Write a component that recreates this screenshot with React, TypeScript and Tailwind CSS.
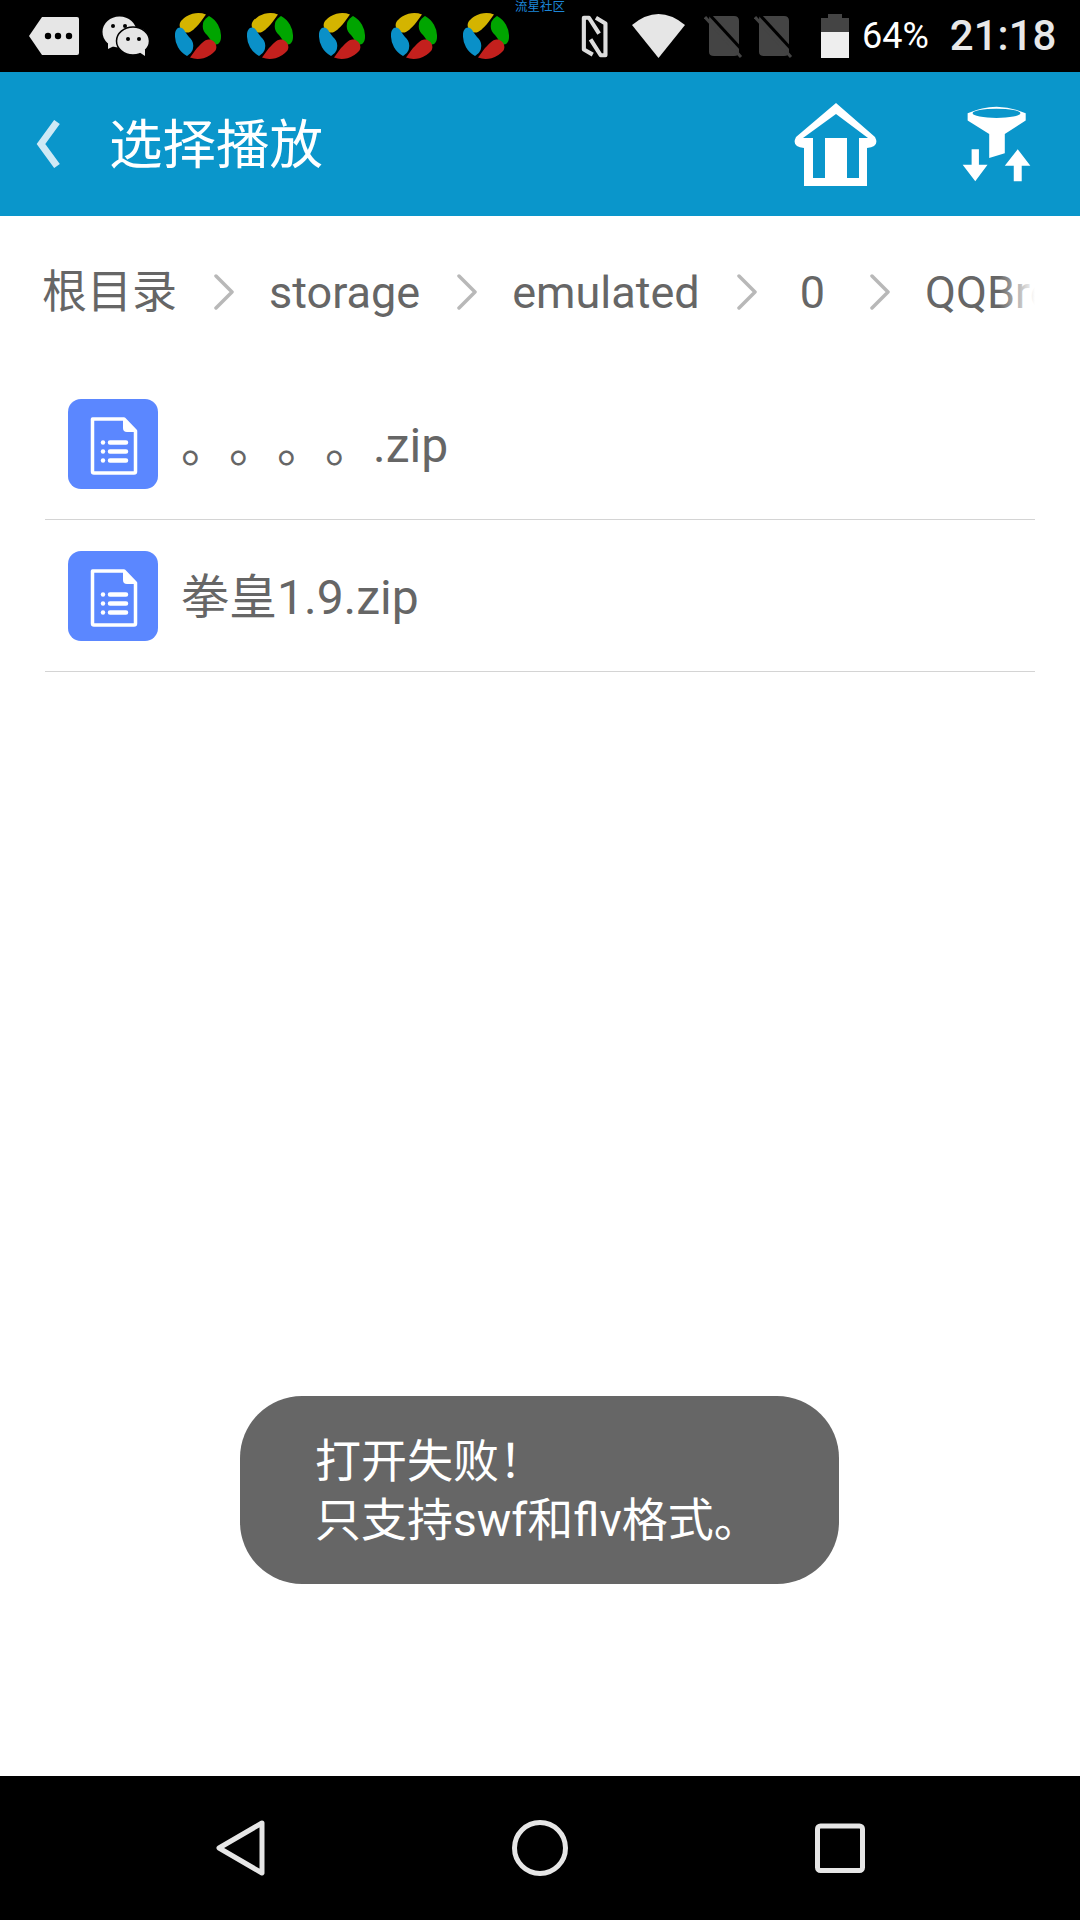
const font = "font-['Roboto','Noto_Sans_CJK_SC',sans-serif]";

const yellowBlob = "M31 1.4A23 23 0 0 0 6 8C3 12 5 18 11 19.5C16 20.5 20 15 24 11C27 7 29 4 31 1.4Z";
const greenBlob = "M34 3A23 23 0 0 1 46 24C46 29 43 33 39 31C36 29 35 25 32 22C29 19 27 16 28 11C28 8 31 5 34 3Z";

const Logo = ({ className }: { className: string }) => (
  <svg viewBox="0 0 46 46" className={`w-[46px] h-[46px] shrink-0 ${className}`}>
    <path fill="#d4b400" d={yellowBlob} />
    <path fill="#00a500" d={greenBlob} />
    <path fill="#c3201d" transform="rotate(180 23 23)" d={yellowBlob} />
    <path fill="#0a90c8" transform="rotate(180 23 23)" d={greenBlob} />
  </svg>
);

const Sim = ({ className }: { className: string }) => (
  <svg viewBox="0 0 39 44" className={`w-[39px] h-[44px] shrink-0 ${className}`}>
    <path fill="#444" d="M6 2H30Q35 2 35 7V38Q35 42 30 42H10Q5 42 5 38V7Q5 2 6 2Z" />
    <path stroke="#000" strokeWidth="3" d="M5 0L39 37" />
    <path stroke="#444" strokeWidth="3" d="M1 3L37 43" />
  </svg>
);

const Chevron = () => (
  <svg viewBox="0 0 20 36" className="w-[20px] h-[36px] shrink-0 ml-[37px] mr-[35px]">
    <path d="M2 2L18 18L2 34" fill="none" stroke="#b8b8b8" strokeWidth="3.5" strokeLinecap="round" strokeLinejoin="round" />
  </svg>
);

const DocIcon = () => (
  <div className="w-[90px] h-[90px] rounded-[13px] bg-[#5b87ff] shrink-0 flex items-center justify-center">
    <svg viewBox="0 0 90 90" className="w-[90px] h-[90px]">
      <path d="M24.5 20H56L67.5 32V72.5Q67.5 74 66 74H26Q24.5 74 24.5 72.5Z" fill="none" stroke="#fff" strokeWidth="3.5" strokeLinejoin="round" />
      <path d="M55 19L69 33H59Q55 33 55 29Z" fill="#fff" />
      <path d="M42 43.5H58M42 52.5H58M42 61.5H58" stroke="#fff" strokeWidth="4.5" strokeLinecap="round" />
      <circle cx="35" cy="43.5" r="2.2" fill="#fff" />
      <circle cx="35" cy="52.5" r="2.2" fill="#fff" />
      <circle cx="35" cy="61.5" r="2.2" fill="#fff" />
    </svg>
  </div>
);

const FileRow = ({ name }: { name: string }) => (
  <div className="h-[152px] mx-[45px] border-b border-[#d4d4d4] flex items-center pl-[23px] pt-px">
    <DocIcon />
    <span className="ml-[23px] pt-[3px] text-[48px] leading-none text-[#666] [text-spacing-trim:space-all]">{name}</span>
  </div>
);

export default function App() {
  return (
    <div className={`relative w-[1080px] h-[1920px] flex flex-col bg-white overflow-hidden ${font}`}>
      {/* status bar */}
      <div className="relative h-[72px] bg-black flex items-center shrink-0 pl-[29px]">
        <svg viewBox="0 0 50 38" className="w-[50px] h-[38px] shrink-0">
          <path fill="#e6e6e6" d="M13 0H48Q50 0 50 2V36Q50 38 48 38H13L0 19Z" />
          <circle cx="19" cy="19" r="3.2" fill="#000" />
          <circle cx="29" cy="19" r="3.2" fill="#000" />
          <circle cx="40" cy="19" r="3.2" fill="#000" />
        </svg>
        <svg viewBox="0 0 48 40" className="w-[48px] h-[40px] shrink-0 ml-[23px]">
          <ellipse cx="17.5" cy="16" rx="17" ry="15.5" fill="#e6e6e6" />
          <path fill="#e6e6e6" d="M6 26L6 33L14 29Z" />
          <ellipse cx="31" cy="25" rx="16.5" ry="14" fill="#e6e6e6" stroke="#000" strokeWidth="1.5" />
          <path fill="#e6e6e6" d="M37 36L43 40L43 33Z" />
          <circle cx="11" cy="10" r="2" fill="#000" />
          <circle cx="23" cy="10" r="2" fill="#000" />
          <circle cx="26" cy="23" r="2" fill="#000" />
          <circle cx="37" cy="23" r="2" fill="#000" />
        </svg>
        <Logo className="ml-[25px]" />
        <Logo className="ml-[26px]" />
        <Logo className="ml-[26px]" />
        <Logo className="ml-[26px]" />
        <Logo className="ml-[26px]" />
        <svg viewBox="115 42 85 134" className="w-[27px] h-[45px] shrink-0 ml-[72px]">
          <path d="M152 166L124 150V50H140L172 100M162 50L192 68V168H177L145 118" fill="none" stroke="#dcdcdc" strokeWidth="13" strokeLinejoin="round" />
        </svg>
        <svg viewBox="0 0 53 44" className="w-[53px] h-[44px] shrink-0 ml-[24px]">
          <path fill="#e6e6e6" d="M0 11Q26.5 -11 53 11L26.5 44Z" />
        </svg>
        <Sim className="ml-[19px]" />
        <Sim className="ml-[11px]" />
        <svg viewBox="0 0 28 44" className="w-[28px] h-[44px] shrink-0 ml-[28px]">
          <path fill="#444" d="M7 0H21V4H28V18H0V4H7Z" />
          <rect y="18" width="28" height="26" fill="#eee" />
        </svg>
        <span className="ml-[13px] text-[36px] leading-none text-white">64%</span>
        <span className="ml-[21px] text-[42px] leading-none font-medium text-[#e8e8e8]">21:18</span>
        <span className="absolute left-[515px] top-0 text-[12.5px] leading-[13px] text-[#1c86d8]">流星社区</span>
      </div>

      {/* header */}
      <div className="h-[144px] bg-[#0a96cb] flex items-center shrink-0 pl-[36px]">
        <svg viewBox="0 0 24 48" className="w-[24px] h-[48px] shrink-0">
          <path d="M21 2L5 24L21 46" fill="none" stroke="#cfe9f5" strokeWidth="7" />
        </svg>
        <span className="ml-[49px] pt-[3px] text-[53.5px] leading-none text-white">选择播放</span>
        <svg viewBox="0 0 83 83" className="w-[83px] h-[83px] shrink-0 ml-[471px]">
          <path fill="#fff" fillRule="evenodd" d="M42 0L81 34Q86 44 73 45V83H10V45Q-3 44 2 34ZM42 11L74 35H65V75H53V35H31V75H19V35H9Z" />
        </svg>
        <svg viewBox="660 75 220 235" className="w-[73px] h-[78px] shrink-0 ml-[83px]">
          <path fill="#fff" fillRule="evenodd" d="M683 100Q770 60 858 100V122L795 162V220L748 235V162L683 122ZM698 100A72 14 0 0 0 842 100A72 14 0 0 0 698 100Z" />
          <path fill="#fff" d="M695 208H717V255H743L706 305L668 255H695Z" />
          <path fill="#fff" d="M822 305H846V258H872L834 208L795 258H822Z" />
        </svg>
      </div>

      {/* breadcrumb */}
      <div className="relative h-[152px] shrink-0 ml-[42px] w-[993px] overflow-hidden flex items-center text-[45px] leading-none text-[#666] whitespace-nowrap">
        <span>根目录</span>
        <Chevron />
        <span>storage</span>
        <Chevron />
        <span>emulated</span>
        <Chevron />
        <span className="mx-[8px]">0</span>
        <Chevron />
        <span>QQBrowser</span>
        <div className="absolute right-0 top-0 h-full w-[36px] bg-gradient-to-r from-white/0 to-white" />
      </div>

      {/* files */}
      <FileRow name="。。。。.zip" />
      <FileRow name="拳皇1.9.zip" />

      {/* toast */}
      <div className="absolute left-[240px] top-[1396px] w-[599px] h-[188px] rounded-[62px] bg-[#666] pl-[75px] pt-[2px] flex flex-col justify-center text-[46px] leading-[59px] text-white">
        <span>打开失败！</span>
        <span>只支持swf和flv格式。</span>
      </div>

      {/* nav bar */}
      <div className="mt-auto h-[144px] bg-black shrink-0 flex items-center pl-[216px]">
        <svg viewBox="0 0 49 56" className="w-[49px] h-[56px] shrink-0">
          <path d="M46 3L3 28L46 53Z" fill="none" stroke="#e6e6e6" strokeWidth="5" strokeLinejoin="round" />
        </svg>
        <svg viewBox="0 0 56 56" className="w-[56px] h-[56px] shrink-0 ml-[247px]">
          <circle cx="28" cy="28" r="25.5" fill="none" stroke="#e6e6e6" strokeWidth="5" />
        </svg>
        <svg viewBox="0 0 50 50" className="w-[50px] h-[50px] shrink-0 ml-[247px]">
          <rect x="2.5" y="3" width="45" height="44.5" rx="3" fill="none" stroke="#e6e6e6" strokeWidth="5" />
        </svg>
      </div>
    </div>
  );
}
